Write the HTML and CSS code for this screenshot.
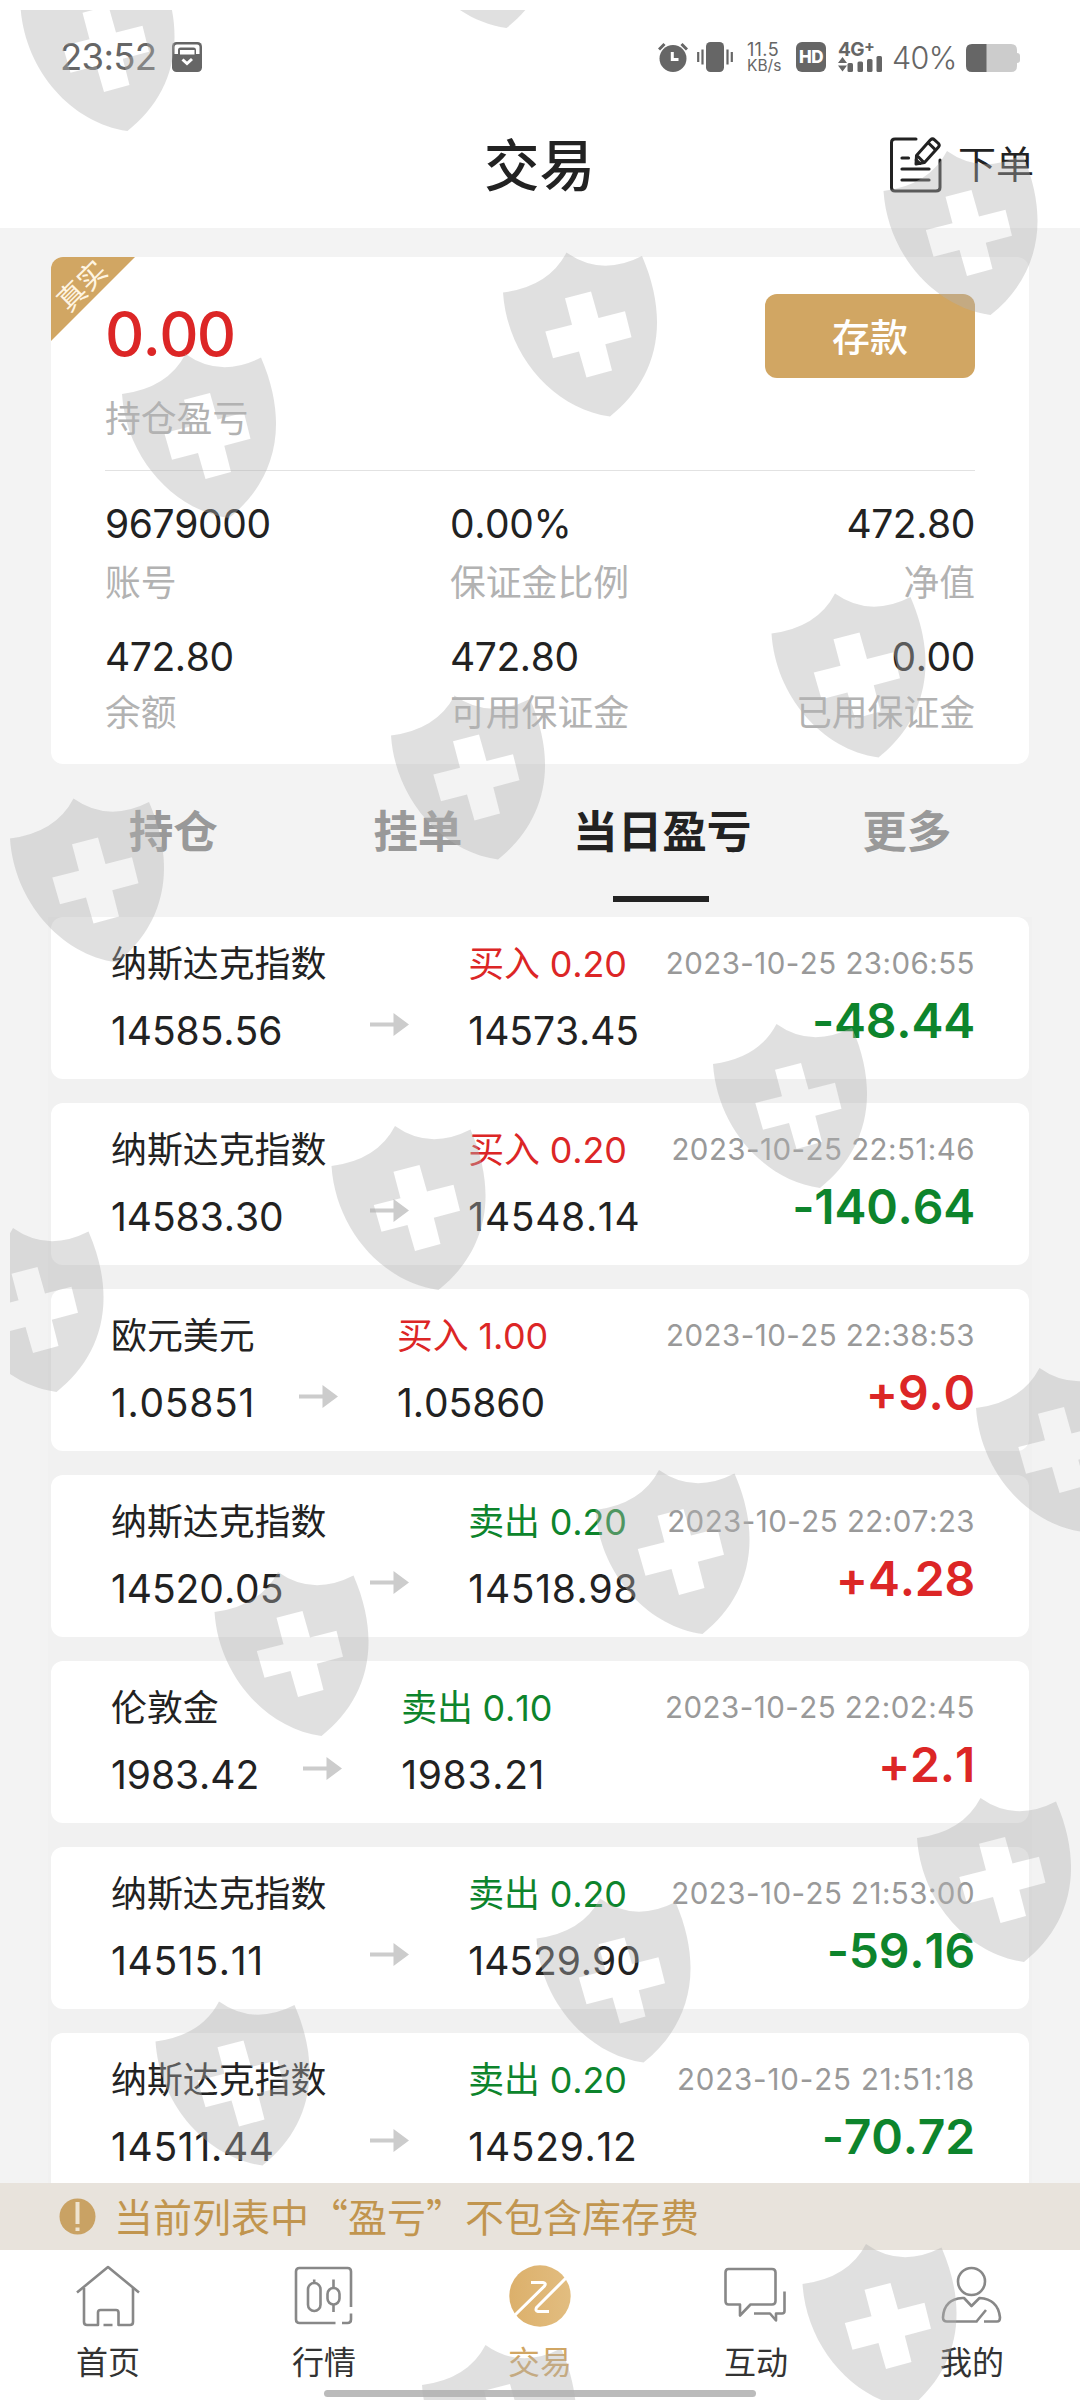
FILE: index.html
```html
<!DOCTYPE html>
<html lang="zh-CN">
<head>
<meta charset="utf-8">
<title>交易</title>
<link rel="stylesheet" href="styles.css">
</head>
<body>
<div class="screen">
  <header class="top">
    <div class="status">
      <span class="clock">23:52</span>
      <svg class="app-badge" width="30" height="30" viewBox="0 0 30 30"><rect width="30" height="30" rx="4.5" fill="#666"/><path d="M2.500 12V5Q2.500 2.500 5 2.500H25Q27.500 2.500 27.500 5V12H24V8Q24 5.500 21.500 5.500H8.500Q6 5.500 6 8V12Z" fill="#fff"/><rect x="8" y="8" width="14.500" height="4.500" fill="#fff"/><path d="M10.500 17.500L15 21.500L20 17" fill="none" stroke="#fff" stroke-width="3"/></svg>
      <div class="status-right">
        <svg class="alarm" width="30" height="30" viewBox="0 0 30 30"><circle cx="15" cy="16.500" r="13.500" fill="#666"/><path d="M1 7.500L6.500 2M29 7.500L23.500 2" stroke="#666" stroke-width="3"/><path d="M14.300 10V17.600H20.500" fill="none" stroke="#fff" stroke-width="3"/></svg>
        <svg class="vibrate" width="36" height="30" viewBox="0 0 36 30"><rect x="9" width="18" height="30" rx="4.500" fill="#666"/><path d="M1.200 10V20M5.500 7.500V22.500M30.500 7.500V22.500M34.800 10V20" stroke="#666" stroke-width="2.200"/></svg>
        <div class="speed"><span>11.5</span><span class="unit">KB/s</span></div>
        <div class="hd">HD</div>
        <div class="net"><span>4G<sup>+</sup></span><svg width="45" height="16" viewBox="0 0 45 16" fill="#666"><path d="M0 7L4.500 1L9 7ZM0 9.500H9L4.500 15.500Z"/><rect x="9.500" y="7" width="5.500" height="9" rx="1.500"/><rect x="19.500" y="5.500" width="5.500" height="10.500" rx="1.500"/><rect x="29" y="3" width="5.500" height="13" rx="1.500"/><rect x="38.500" y="0" width="5.500" height="16" rx="1.500"/></svg></div>
        <span class="percent">40%</span>
        <svg class="battery" width="54" height="28" viewBox="0 0 54 28"><path d="M20 0H45Q51 0 51 6V9Q54 9 54 12V16Q54 19 51 19V22Q51 28 45 28H20Z" fill="#ccc"/><path d="M6 0H20.500V28H6Q0 28 0 22V6Q0 0 6 0Z" fill="#666"/></svg>
      </div>
    </div>
    <div class="titlebar">
      <h1>交易</h1>
      <div class="order">
        <svg width="52" height="56" viewBox="0 0 52 56" fill="none" stroke="#222" stroke-width="3" stroke-linecap="round"><path d="M26 2H5Q1.500 2 1.500 5.500V50.500Q1.500 54 5 54H46Q50 54 50 50.500V23"/><path d="M12 21H18.500M12 32H39M12 43H39" stroke-width="3.200"/><path d="M26.500 18.500L40.500 2.800Q42.500 1 44.500 2.800L48.500 6.500Q50 8.300 48.500 10L34.500 25.500L26 27Z" stroke-linejoin="round"/><path d="M38.500 6L45.500 12.800M28 19.500L33.500 25M26.200 23L30 26.500"/></svg>
        <span>下单</span>
      </div>
    </div>
  </header>

  <section class="account">
    <div class="ribbon"><span>真实</span></div>
    <div class="summary">
      <div>
        <div class="total">0.00</div>
        <div class="label">持仓盈亏</div>
      </div>
      <div class="deposit">存款</div>
    </div>
    <div class="figures">
      <div><b>9679000</b><span class="label">账号</span></div>
      <div><b>0.00%</b><span class="label">保证金比例</span></div>
      <div><b>472.80</b><span class="label">净值</span></div>
      <div><b>472.80</b><span class="label">余额</span></div>
      <div><b>472.80</b><span class="label">可用保证金</span></div>
      <div><b>0.00</b><span class="label">已用保证金</span></div>
    </div>
  </section>

  <nav class="tabs">
    <div>持仓</div><div>挂单</div><div class="active">当日盈亏</div><div>更多</div>
  </nav>

  <main class="list">
    <article class="trade">
      <div class="open"><span>纳斯达克指数</span><b>14585.56</b></div>
      <svg class="arrow" width="39" height="23" viewBox="0 0 39 23"><path d="M0 9.500H23.500V0L39 11.500L23.500 23V13.500H0Z" fill="#ccc"/></svg>
      <div class="close"><span class="red">买入 0.20</span><b>14573.45</b></div>
      <div class="result green"><time>2023-10-25 23:06:55</time><strong>-48.44</strong></div>
    </article>
    <article class="trade">
      <div class="open"><span>纳斯达克指数</span><b>14583.30</b></div>
      <svg class="arrow" width="39" height="23" viewBox="0 0 39 23"><path d="M0 9.500H23.500V0L39 11.500L23.500 23V13.500H0Z" fill="#ccc"/></svg>
      <div class="close"><span class="red">买入 0.20</span><b class="loose">14548.14</b></div>
      <div class="result green"><time>2023-10-25 22:51:46</time><strong>-140.64</strong></div>
    </article>
    <article class="trade">
      <div class="open"><span>欧元美元</span><b class="loose">1.05851</b></div>
      <svg class="arrow" width="39" height="23" viewBox="0 0 39 23"><path d="M0 9.500H23.500V0L39 11.500L23.500 23V13.500H0Z" fill="#ccc"/></svg>
      <div class="close"><span class="red">买入 1.00</span><b>1.05860</b></div>
      <div class="result red"><time>2023-10-25 22:38:53</time><strong>+9.0</strong></div>
    </article>
    <article class="trade">
      <div class="open"><span>纳斯达克指数</span><b>14520.05</b></div>
      <svg class="arrow" width="39" height="23" viewBox="0 0 39 23"><path d="M0 9.500H23.500V0L39 11.500L23.500 23V13.500H0Z" fill="#ccc"/></svg>
      <div class="close"><span class="green">卖出 0.20</span><b class="loose">14518.98</b></div>
      <div class="result red"><time>2023-10-25 22:07:23</time><strong>+4.28</strong></div>
    </article>
    <article class="trade">
      <div class="open"><span>伦敦金</span><b>1983.42</b></div>
      <svg class="arrow" width="39" height="23" viewBox="0 0 39 23"><path d="M0 9.500H23.500V0L39 11.500L23.500 23V13.500H0Z" fill="#ccc"/></svg>
      <div class="close"><span class="green">卖出 0.10</span><b class="loose">1983.21</b></div>
      <div class="result red"><time>2023-10-25 22:02:45</time><strong>+2.1</strong></div>
    </article>
    <article class="trade">
      <div class="open"><span>纳斯达克指数</span><b class="loose">14515.11</b></div>
      <svg class="arrow" width="39" height="23" viewBox="0 0 39 23"><path d="M0 9.500H23.500V0L39 11.500L23.500 23V13.500H0Z" fill="#ccc"/></svg>
      <div class="close"><span class="green">卖出 0.20</span><b>14529.90</b></div>
      <div class="result green"><time>2023-10-25 21:53:00</time><strong>-59.16</strong></div>
    </article>
    <article class="trade">
      <div class="open"><span>纳斯达克指数</span><b class="loose">14511.44</b></div>
      <svg class="arrow" width="39" height="23" viewBox="0 0 39 23"><path d="M0 9.500H23.500V0L39 11.500L23.500 23V13.500H0Z" fill="#ccc"/></svg>
      <div class="close"><span class="green">卖出 0.20</span><b class="loose">14529.12</b></div>
      <div class="result green"><time class="loose">2023-10-25 21:51:18</time><strong>-70.72</strong></div>
    </article>
  </main>

  <div class="notice">
    <svg width="37" height="37" viewBox="0 0 37 37"><circle cx="18.500" cy="18.500" r="18" fill="#c9a264"/><path d="M18.500 4V26M18.500 29.500V33" stroke="#eee3d0" stroke-width="4"/></svg>
    <span>当前列表中“盈亏”不包含库存费</span>
  </div>

  <footer class="nav">
    <div>
      <svg width="64" height="62" viewBox="0 0 64 62" fill="none" stroke="#888" stroke-width="2.600" stroke-linejoin="round"><path d="M1 27.500L32 2L63 27.500"/><path d="M8 23V57Q8 60 11 60H22V47.500Q22 45 24.500 45H40Q42.500 45 42.500 47.500V60H54Q57 60 57 57V23M27.500 60H36.500"/></svg>
      <span>首页</span>
    </div>
    <div>
      <svg width="64" height="62" viewBox="0 0 64 62" fill="none" stroke="#888" stroke-width="2.600"><path d="M43.500 58H7.500Q4 58 4 54.500V6.500Q4 3 7.500 3H55.500Q59 3 59 6.500V42M59 48.500V54.500Q59 58 55.500 58H50"/><rect x="16" y="18" width="12.500" height="28" rx="6.200"/><path d="M22.200 14.500V19M41.500 14.500V23M41.500 39.500V47"/><rect x="35.500" y="23" width="12" height="16.500" rx="6"/></svg>
      <span>行情</span>
    </div>
    <div class="current">
      <svg width="64" height="62" viewBox="0 0 64 62"><defs><linearGradient id="gold" x1="0" y1="0" x2="1" y2="0"><stop offset="0" stop-color="#dcb06b"/><stop offset="1" stop-color="#e2bd80"/></linearGradient></defs><circle cx="32" cy="31" r="30.700" fill="url(#gold)"/><path d="M7 50L36.500 21Q38.500 18 35 17.500H23M58 13L28.500 42.500Q27 46 30 46.500H41" fill="none" stroke="#fff" stroke-width="3"/></svg>
      <span>交易</span>
    </div>
    <div>
      <svg width="64" height="62" viewBox="1 0 64 62" fill="none" stroke="#888" stroke-width="2.600" stroke-linejoin="round"><path d="M5.500 4H49Q52.500 4 52.500 7.500V36Q52.500 39.500 49 39.500H27.500L17 50.500V39.500H5.500Q2.500 39.500 2.500 36V7.500Q2.500 4 5.500 4Z"/><path d="M61.500 26.500V46Q61.500 48.500 59 48.500H53V55.500L47 48.500H31"/></svg>
      <span>互动</span>
    </div>
    <div>
      <svg width="64" height="62" viewBox="0 0 64 62" fill="none" stroke="#888" stroke-width="2.600" stroke-linejoin="round"><circle cx="31.500" cy="16.500" r="13.500"/><path d="M37.500 56.500H7Q3 56.500 3 52.500Q4 34 22.500 33H24L31.500 41L39.500 33Q58 34 60 52.500Q60 56.500 57 56.500H44M36.500 56.500L46 45"/></svg>
      <span>我的</span>
    </div>
  </footer>
  <div class="home-bar"></div>

  <svg class="watermark" viewBox="0 0 1080 2400" width="1080" height="2400">
    <defs>
      <clipPath id="edge"><rect x="10" y="10" width="1070" height="2390"/></clipPath>
      <path id="shield" fill-rule="evenodd" d="M0 40Q46 34 63.500 0Q98 24.500 139 3.500C170 75 150 130 107 164C50 156 4 102 0 40ZM62 45.700L69 72.300L42.300 79L50 105.700L76 99L83.500 125L109 118L102.300 91.700L128.500 84.700L122 58.700L95.500 65.500L88 39Z"/>
    </defs>
    <g clip-path="url(#edge)">
      <use href="#shield" x="20.500" y="-33"/><use href="#shield" x="399.500" y="-136"/>
      <use href="#shield" x="883.500" y="151"/><use href="#shield" x="503" y="252.500"/><use href="#shield" x="122" y="354"/>
      <use href="#shield" x="771.500" y="593.500"/><use href="#shield" x="391" y="695.500"/><use href="#shield" x="10" y="798.500"/>
      <use href="#shield" x="713" y="1024"/><use href="#shield" x="331.500" y="1126"/><use href="#shield" x="-50.500" y="1228"/>
      <use href="#shield" x="976" y="1368"/><use href="#shield" x="595.500" y="1470"/><use href="#shield" x="214.500" y="1572"/>
      <use href="#shield" x="917" y="1798"/><use href="#shield" x="536.500" y="1898.500"/><use href="#shield" x="155.500" y="2001.500"/>
      <use href="#shield" x="802.500" y="2244"/><use href="#shield" x="422" y="2345"/>
    </g>
  </svg>
</div>
</body>
</html>
```
FILE: styles.css
```css
* { box-sizing: border-box; }
body { margin: 0; }
svg { display: block; flex: none; }
b { font-weight: 400; }

.screen {
  position: relative;
  display: flex;
  flex-direction: column;
  width: 1080px;
  height: 2400px;
  overflow: hidden;
  background: #f3f3f3;
  color: #222;
  font-family: Inter, "Noto Sans CJK SC", sans-serif;
  font-kerning: none;
}

/* header */
.top { height: 228px; background: #fff; flex: none; }
.status {
  display: flex;
  align-items: flex-start;
  height: 100px;
  padding: 42px 60px 0;
  color: #666;
}
.clock { font-size: 36.500px; line-height: 31px; letter-spacing: -.7px; width: 112px; }
.status-right { display: flex; margin-left: auto; height: 30px; }
.alarm { margin-right: 9px; }
.vibrate { margin-right: 14px; }
.speed { display: flex; flex-direction: column; width: 49px; font-size: 18px; line-height: 15px; letter-spacing: .3px; }
.speed .unit { font-size: 15.500px; line-height: 17px; letter-spacing: 0; }
.hd {
  width: 30px; height: 30px; margin-right: 12px;
  border-radius: 6px; background: #666; color: #fff;
  font-size: 17px; font-weight: 800; line-height: 30px; text-align: center; letter-spacing: -.5px;
}
.net { width: 54px; font-size: 19px; font-weight: 700; line-height: 15px; white-space: nowrap; }
.net span { display: block; height: 14px; letter-spacing: -.5px; }
.net sup { font-size: 16px; line-height: 0; vertical-align: 4px; }
.percent { width: 74px; font-size: 30.500px; line-height: 32px; letter-spacing: -.6px; font-weight: 300; }
.battery { margin-top: 2px; }
.titlebar {
  display: grid;
  grid-template-columns: 1fr auto 1fr;
  height: 128px;
  align-items: center;
  padding: 0 46px 0 45px;
}
.titlebar h1 { grid-column: 2; margin: 0; font-size: 55.500px; font-weight: 500; line-height: 128px; padding-top: 2px; }
.order { display: flex; align-items: center; justify-content: flex-end; gap: 16px; font-size: 38px; line-height: 60px; }
.order span { margin-top: -2px; }

/* account card */
.account {
  position: relative;
  flex: none;
  height: 507px;
  margin: 29px 51px 0;
  padding: 0 54px;
  border-radius: 12px;
  background: #fff;
  overflow: hidden;
}
.ribbon {
  position: absolute;
  left: 0; top: 0;
  width: 84px; height: 84px;
  background: #d1a663;
  clip-path: polygon(0 0, 100% 0, 0 100%);
  color: #fff5e2;
}
.ribbon span {
  position: absolute;
  left: 1px; top: 11px;
  width: 60px;
  font-size: 28.500px; line-height: 36px; text-align: center;
  transform: rotate(-45deg);
}
.summary {
  display: flex;
  justify-content: space-between;
  height: 214px;
  padding-top: 37px;
  border-bottom: 1px solid #e2e2e2;
}
.total { font-size: 61px; font-weight: 500; line-height: 80px; letter-spacing: -1.800px; color: #dc2626; }
.label { font-size: 35.800px; line-height: 50px; color: #b2b2b2; }
.summary .label { margin-top: 20px; }
.deposit {
  width: 210px; height: 84px;
  border-radius: 12px;
  background: #d1a663;
  color: #fff;
  font-size: 38px; font-weight: 500; line-height: 86px; text-align: center;
}
.figures {
  display: grid;
  grid-template-columns: 345px 1fr auto;
  grid-template-rows: 132.500px 132px;
  padding-top: 28px;
}
.figures div { display: flex; flex-direction: column; }
.figures div:nth-child(3n) { align-items: flex-end; }
.figures b { font-size: 39px; line-height: 50px; letter-spacing: -.4px; }
.figures .label { margin-top: 9px; }
.figures div:nth-child(n+4) .label { margin-top: 6.500px; }

/* tabs */
.tabs { display: grid; grid-template-columns: repeat(4, 1fr); margin: 0 51px; height: 153px; flex: none; }
.tabs div {
  display: flex;
  flex-direction: column;
  align-items: center;
  padding-top: 38px;
  font-size: 44.600px; font-weight: 700; line-height: 60px;
  color: #999;
}
.tabs .active { color: #222; }
.tabs .active::after { content: ""; width: 96px; height: 6px; margin: 34px 2px 0 0; background: #222; }

/* trade list */
.list {
  display: flex;
  flex-direction: column;
  gap: 24px;
  flex: none;
  height: 1266px;
  margin: 0 48px;
  padding: 0 3px;
  overflow: hidden;
  background: #f1f1f1;
}
.trade {
  display: flex;
  flex: none;
  height: 162px;
  padding: 22px 54px 0 60px;
  border-radius: 12px;
  background: #fff;
}
.open, .close, .result { display: flex; flex-direction: column; white-space: nowrap; }
.open span, .close span { font-size: 35.900px; line-height: 50px; }
.close span { letter-spacing: -.15px; }
.open b, .close b { margin-top: 17px; font-size: 39px; line-height: 50px; letter-spacing: -.05px; }
.open .loose, .close .loose { letter-spacing: .7px; }
.arrow { margin: 74px 59px 0 44px; }
.result { margin-left: auto; align-items: flex-end; }
.result time { font-size: 29.500px; line-height: 48px; letter-spacing: .45px; color: #999; }
.result .loose { letter-spacing: .85px; }
.result strong { margin-top: 4px; font-size: 48px; font-weight: 600; line-height: 60px; letter-spacing: -.2px; }
.red { color: #dc2626; }
.green { color: #0d842c; }

/* notice strip */
.notice {
  display: flex;
  align-items: center;
  gap: 18px;
  flex: none;
  height: 67px;
  padding-left: 59px;
  background: #e8e3dc;
  color: #c1954e;
  font-family: "Noto Sans CJK SC", sans-serif;
  font-size: 39px;
  line-height: 64px;
}
.notice span { margin-top: -4px; }

/* bottom navigation */
.nav { display: grid; grid-template-columns: repeat(5, 1fr); flex: none; height: 150px; background: #fff; }
.nav div { display: flex; flex-direction: column; align-items: center; padding-top: 15px; }
.nav span { margin-top: 16px; font-size: 32px; line-height: 40px; color: #333; }
.nav .current span { color: #d1a663; }
.home-bar {
  position: absolute;
  left: 324px; bottom: 3px;
  width: 432px; height: 7px;
  border-radius: 4px;
  background: #bbb;
}
.watermark { position: absolute; left: 0; top: 0; fill: rgba(177, 177, 177, .4); pointer-events: none; }
```
